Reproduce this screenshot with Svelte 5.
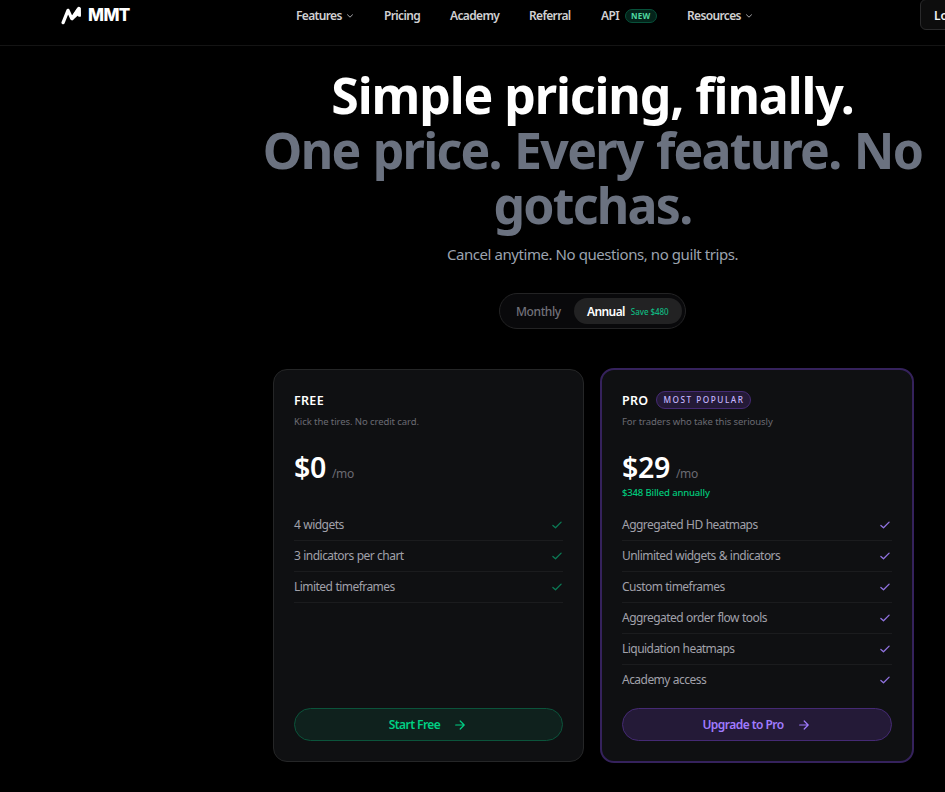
<script>
  const nav = [
    { label: 'Features', menu: true, cls: 'features' },
    { label: 'Pricing', cls: 'pricing' },
    { label: 'Academy', cls: 'academy' },
    { label: 'Referral', cls: 'referral' },
    { label: 'API', badge: 'NEW', cls: 'api' },
    { label: 'Resources', menu: true, cls: 'resources' }
  ];

  const plans = [
    {
      id: 'free',
      name: 'FREE',
      blurb: 'Kick the tires. No credit card.',
      price: '$0',
      features: ['4 widgets', '3 indicators per chart', 'Limited timeframes'],
      cta: 'Start Free'
    },
    {
      id: 'pro',
      name: 'PRO',
      tag: 'MOST POPULAR',
      blurb: 'For traders who take this seriously',
      price: '$29',
      billed: '$348 Billed annually',
      features: [
        'Aggregated HD heatmaps',
        'Unlimited widgets & indicators',
        'Custom timeframes',
        'Aggregated order flow tools',
        'Liquidation heatmaps',
        'Academy access'
      ],
      cta: 'Upgrade to Pro'
    }
  ];

  let billing = $state('annual');
</script>

<div class="page">
  <header>
    <a class="logo" href="#top" aria-label="MMT">
      <svg width="20" height="19" viewBox="0 0 20 19">
        <path d="M2.1 16.6 7 4.4 10.8 12.6 17.8 2.4 18.2 9" />
        <path class="fill" d="M16.4 2 19.8 1.8V10.8L16.6 9.8 11.4 14.6 9.6 12.6z" />
      </svg>
      <span>MMT</span>
    </a>
    <nav>
      {#each nav as item}
        <a class={item.cls} href="#{item.cls}">
          <span>{item.label}</span>
          {#if item.badge}<em>{item.badge}</em>{/if}
          {#if item.menu}
            <svg width="8" height="8" viewBox="0 0 8 8"><path d="M1.5 2.8 4 5.2 6.5 2.8" /></svg>
          {/if}
        </a>
      {/each}
    </nav>
    <button class="login">Log in</button>
  </header>

  <main>
    <h1>
      <span class="lead">Simple pricing, finally.</span>
      <span class="rest">One price. Every feature. No gotchas.</span>
    </h1>
    <p class="sub">Cancel anytime. No questions, no guilt trips.</p>

    <div class="toggle">
      <button
        class="monthly"
        class:active={billing === 'monthly'}
        onclick={() => (billing = 'monthly')}
      >
        Monthly
      </button>
      <button
        class="annual"
        class:active={billing === 'annual'}
        onclick={() => (billing = 'annual')}
      >
        Annual <small>Save $480</small>
      </button>
    </div>

    <div class="plans">
      {#each plans as plan}
        <section class="card {plan.id}">
          <div class="head">
            <h2>{plan.name}</h2>
            {#if plan.tag}<span class="tag">{plan.tag}</span>{/if}
          </div>
          <p class="blurb">{plan.blurb}</p>
          <div class="price">
            <strong>{plan.price}</strong>
            <span>/mo</span>
          </div>
          <p class="billed">{plan.billed ?? ''}</p>
          <ul>
            {#each plan.features as feature}
              <li>
                <span>{feature}</span>
                <svg width="12" height="12" viewBox="0 0 12 12"><path d="M1.9 6.5 4.5 8.7 10.1 3.1" /></svg>
              </li>
            {/each}
          </ul>
          <button class="cta">
            {plan.cta}
            <svg width="12" height="12" viewBox="0 0 12 12"><path d="M1.7 6H10M6.2 2 10.2 6 6.2 10" /></svg>
          </button>
        </section>
      {/each}
    </div>
  </main>
</div>

<style>
  :global(body) {
    background: #000;
  }
  .page {
    width: 100%;
    height: 792px;
    overflow: hidden;
    background: #000;
    color: #fff;
    font-family: 'Noto Sans', 'Open Sans', sans-serif;
  }
  a {
    color: inherit;
    text-decoration: none;
  }
  button {
    font: inherit;
    cursor: pointer;
  }
  svg {
    flex: none;
    fill: none;
    stroke: currentColor;
    stroke-linecap: round;
    stroke-linejoin: round;
  }
  h1,
  h2,
  p,
  ul {
    margin: 0;
    padding: 0;
  }

  header {
    box-sizing: border-box;
    display: flex;
    align-items: center;
    width: 1185px;
    height: 46px;
    padding: 0 0 15px 61px;
    border-bottom: 1px solid #141414;
  }
  .logo {
    display: flex;
    align-items: center;
    gap: 7px;
    width: 235px;
    font-family: Inter, sans-serif;
    font-size: 17px;
    font-weight: 800;
    letter-spacing: -0.6px;
    line-height: 30px;
  }
  .logo svg {
    stroke-width: 3.3;
  }
  .logo .fill {
    fill: currentColor;
    stroke: none;
  }
  nav {
    display: flex;
    width: 624px;
    padding-top: 1px;
    font-size: 12px;
    font-weight: 600;
    line-height: 30px;
    color: #d0d0d2;
  }
  nav a {
    display: flex;
    align-items: center;
    letter-spacing: -0.65px;
  }
  nav svg {
    margin-left: 4px;
    color: #a8a8ac;
  }
  .features {
    width: 88px;
  }
  .pricing {
    width: 66px;
  }
  .academy {
    width: 79px;
  }
  .referral {
    width: 72px;
  }
  .api {
    width: 86px;
  }
  nav em {
    box-sizing: border-box;
    height: 14px;
    margin-left: 6px;
    padding: 0 5px;
    border: 1px solid #07513a;
    border-radius: 7px;
    background: #04231a;
    color: #4fd8a0;
    font-size: 8px;
    font-style: normal;
    font-weight: 700;
    line-height: 12px;
    letter-spacing: 0.3px;
  }
  .login {
    box-sizing: border-box;
    width: 64px;
    height: 31px;
    margin-top: -1px;
    padding: 2px 0 0 13px;
    border: 1px solid #2a2a2b;
    border-radius: 6px;
    background: #0d0d0d;
    color: #f4f4f5;
    font-size: 12px;
    font-weight: 600;
    text-align: left;
  }

  main {
    display: flex;
    flex-direction: column;
    align-items: center;
    width: 1185px;
  }
  h1 {
    width: 700px;
    margin-top: 22px;
    font-size: 50px;
    font-weight: 700;
    font-variant-ligatures: none;
    line-height: 55px;
    text-align: center;
  }
  h1 span {
    display: block;
  }
  .lead {
    letter-spacing: -1.1px;
  }
  .rest {
    color: #6b7280;
    letter-spacing: -1.75px;
    word-spacing: 2px;
  }
  .sub {
    margin-top: 9px;
    color: #9ca3af;
    font-size: 15px;
    line-height: 24px;
    letter-spacing: -0.43px;
  }
  .toggle {
    box-sizing: border-box;
    display: flex;
    width: 187px;
    height: 36px;
    margin-top: 27px;
    padding: 4px 3px;
    border: 1px solid #232324;
    border-radius: 18px;
    background: #09090b;
  }
  .toggle button {
    display: flex;
    align-items: center;
    padding: 1px 0 0 13px;
    border: 0;
    border-radius: 13px;
    background: none;
    color: #71717a;
    font-size: 12px;
    font-weight: 500;
    line-height: 25px;
    white-space: nowrap;
  }
  .toggle .monthly {
    width: 71px;
    letter-spacing: -0.4px;
  }
  .toggle .annual {
    width: 108px;
    letter-spacing: -0.6px;
  }
  .toggle .active {
    background: #222223;
    color: #fff;
    font-weight: 600;
  }
  .toggle small {
    margin-left: 6px;
    color: #10b981;
    font-size: 8px;
    font-weight: 500;
    letter-spacing: -0.05px;
  }

  .plans {
    display: flex;
    align-items: center;
    gap: 16px;
    width: 641px;
    margin-top: 39px;
    padding-left: 2px;
  }
  .card {
    box-sizing: border-box;
    display: flex;
    flex: none;
    flex-direction: column;
    width: 311px;
    height: 393px;
    padding: 22px 20px 20px;
    border: 1px solid #252627;
    border-radius: 14px;
    background: #0f1012;
  }
  .card.pro {
    width: 314px;
    height: 395px;
    border: 2px solid #35225c;
  }
  .head {
    display: flex;
    align-items: center;
    gap: 8px;
    height: 18px;
  }
  h2 {
    font-size: 12.5px;
    font-weight: 600;
    line-height: 18px;
    letter-spacing: 0.3px;
  }
  .tag {
    box-sizing: border-box;
    height: 18px;
    margin-top: -2px;
    padding: 0 6px;
    border: 1px solid #452a74;
    border-radius: 9px;
    background: #241a37;
    color: #c4b5fd;
    font-size: 8.25px;
    font-weight: 500;
    line-height: 15px;
    letter-spacing: 1.5px;
  }
  .blurb {
    margin-top: 5px;
    color: #6b6b73;
    font-size: 9.5px;
    line-height: 14px;
    letter-spacing: -0.08px;
  }
  .price {
    display: flex;
    align-items: baseline;
    gap: 6px;
    height: 36px;
    margin-top: 20px;
    line-height: 36px;
  }
  .price strong {
    font-size: 28.5px;
    font-weight: 600;
    letter-spacing: -0.3px;
  }
  .price span {
    color: #6b6b73;
    font-size: 12px;
    letter-spacing: -0.4px;
  }
  .billed {
    height: 14px;
    margin-top: 1px;
    color: #00c97b;
    font-size: 9.5px;
    font-weight: 500;
    line-height: 14px;
    letter-spacing: -0.15px;
  }
  ul {
    margin-top: 10px;
    list-style: none;
  }
  li {
    box-sizing: border-box;
    display: flex;
    align-items: center;
    justify-content: space-between;
    height: 31px;
    padding-bottom: 1px;
    border-bottom: 1px solid #1b1c1e;
    color: #a1a1aa;
    font-size: 12px;
    letter-spacing: -0.54px;
    word-spacing: 0.4px;
  }
  .pro li {
    padding-right: 1px;
  }
  .pro li:last-child {
    border-color: transparent;
  }
  li svg {
    color: #0b7a55;
    stroke-width: 1.3;
  }
  .pro li svg {
    color: #9173e0;
  }
  .cta {
    box-sizing: border-box;
    display: flex;
    align-items: center;
    justify-content: center;
    gap: 14px;
    height: 33px;
    margin-top: auto;
    padding-right: 8px;
    border: 1px solid #0b543b;
    border-radius: 17px;
    background: #0f211d;
    color: #00d084;
    font-size: 12px;
    font-weight: 600;
    letter-spacing: -0.55px;
  }
  .cta svg {
    stroke-width: 1.2;
  }
  .pro .cta {
    border-color: #452a74;
    background: #241a37;
    color: #a07bff;
  }
</style>
